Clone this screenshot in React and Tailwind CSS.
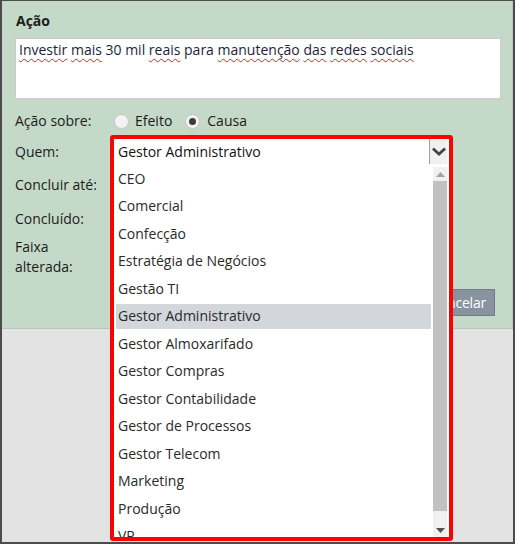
import React from "react";

const options = [
  "CEO",
  "Comercial",
  "Confecção",
  "Estratégia de Negócios",
  "Gestão TI",
  "Gestor Administrativo",
  "Gestor Almoxarifado",
  "Gestor Compras",
  "Gestor Contabilidade",
  "Gestor de Processos",
  "Gestor Telecom",
  "Marketing",
  "Produção",
  "VP",
];

const selected = "Gestor Administrativo";

function Spell({ children }) {
  return (
    <span className="underline decoration-wavy decoration-[#e02020] decoration-1 underline-offset-[3px]">
      {children}
    </span>
  );
}

function Radio({ checked }) {
  return (
    <span className="w-[15px] h-[15px] rounded-full border border-[#c4c4c4] bg-[#f3f3f3] flex items-center justify-center">
      {checked && <span className="w-[7px] h-[7px] rounded-full bg-[#3c3c3c]" />}
    </span>
  );
}

function Chevron() {
  return (
    <svg width="14" height="10" viewBox="0 0 14 10">
      <path d="M2 2.5 L7 7 L12 2.5" fill="none" stroke="#444" strokeWidth="2.8" strokeLinecap="square" />
    </svg>
  );
}

export default function App() {
  return (
    <div
      className="relative w-[515px] h-[544px] overflow-hidden bg-[#e3e3e3] border-t border-x-2 border-b-2 border-[#4b4b4b] text-[14px] text-[#1c1c1c]"
      style={{ fontFamily: '"Open Sans", "Noto Sans", sans-serif' }}
    >
      {/* form panel */}
      <div className="h-[328px] bg-[#c4d9c8] border-r border-b border-[#b7c7bb] pt-[10px] pl-[13px] flex flex-col">
        <div className="font-bold leading-[20px] ml-[1px]">Ação</div>
        <div className="mt-[7px] w-[486px] h-[61px] bg-white border border-[#cbcbcb] px-[3px] pt-[1px] leading-[20px] text-[#1e1e3c]">
          <Spell>Investir</Spell> <Spell>mais</Spell> 30 mil <Spell>reais</Spell> para{" "}
          <Spell>manutenção</Spell> <Spell>das</Spell> <Spell>redes</Spell> <Spell>sociais</Spell>
        </div>

        <div className="mt-[12px] h-[20px] flex items-center leading-[20px]">
          <span className="w-[99px]">Ação sobre:</span>
          <Radio />
          <span className="ml-[6px]">Efeito</span>
          <span className="ml-[13px]" />
          <Radio checked />
          <span className="ml-[7px]">Causa</span>
        </div>
        <div className="mt-[11px] h-[20px] leading-[20px]">Quem:</div>
        <div className="mt-[13px] h-[20px] leading-[20px]">Concluir até:</div>
        <div className="mt-[14px] h-[20px] leading-[20px]">Concluído:</div>
        <div className="mt-[8px] leading-[20px]">
          Faixa
          <br />
          alterada:
        </div>

        <div className="mt-[12px] flex justify-end pr-[17px]">
          <button className="h-[27px] px-[8px] bg-[#87939e] border border-[#6f7b86] text-white leading-[20px] tracking-[-0.2px]">
            Cancelar
          </button>
        </div>
      </div>

      {/* open select list, outlined in red */}
      <div className="absolute left-[108px] top-[134px] w-[343px] h-[406px] border-[4px] border-[#ff0000] rounded-[3px] bg-white flex flex-col overflow-hidden">
        <div className="h-[25px] flex items-stretch shrink-0">
          <div className="flex-1 pl-[4px] flex items-center leading-[20px] text-[#111]">{selected}</div>
          <div className="w-[18px] mr-[2px] bg-[#f0f0f0] border-l border-[#9e9e9e] flex items-center justify-center">
            <Chevron />
          </div>
        </div>
        <div className="flex-1 flex min-h-0">
          <div className="flex-1 pl-[2px] pt-[1px] overflow-hidden">
            {options.map((o) => (
              <div key={o} className="h-[27.5px] flex items-center">
                <div
                  className={
                    "w-full h-[25px] pl-[2px] flex items-center leading-[20px] text-[#2a2a2a] " +
                    (o === selected ? "bg-[#d3d6db]" : "")
                  }
                >
                  {o}
                </div>
              </div>
            ))}
          </div>
          <div className="w-[14px] ml-[2px] mr-[2px] mt-[3px] bg-[#f0f0f0] flex flex-col">
            <div className="h-[14px] flex items-center justify-center">
              <svg width="9" height="5" viewBox="0 0 9 5">
                <path d="M0 5 L4.5 0 L9 5 Z" fill="#a3a3a3" />
              </svg>
            </div>
            <div className="h-[330px] bg-[#c1c1c1]" />
            <div className="flex-1" />
            <div className="h-[14px] flex items-center justify-center">
              <svg width="9" height="5" viewBox="0 0 9 5">
                <path d="M0 0 L9 0 L4.5 5 Z" fill="#505050" />
              </svg>
            </div>
          </div>
        </div>
      </div>
    </div>
  );
}
